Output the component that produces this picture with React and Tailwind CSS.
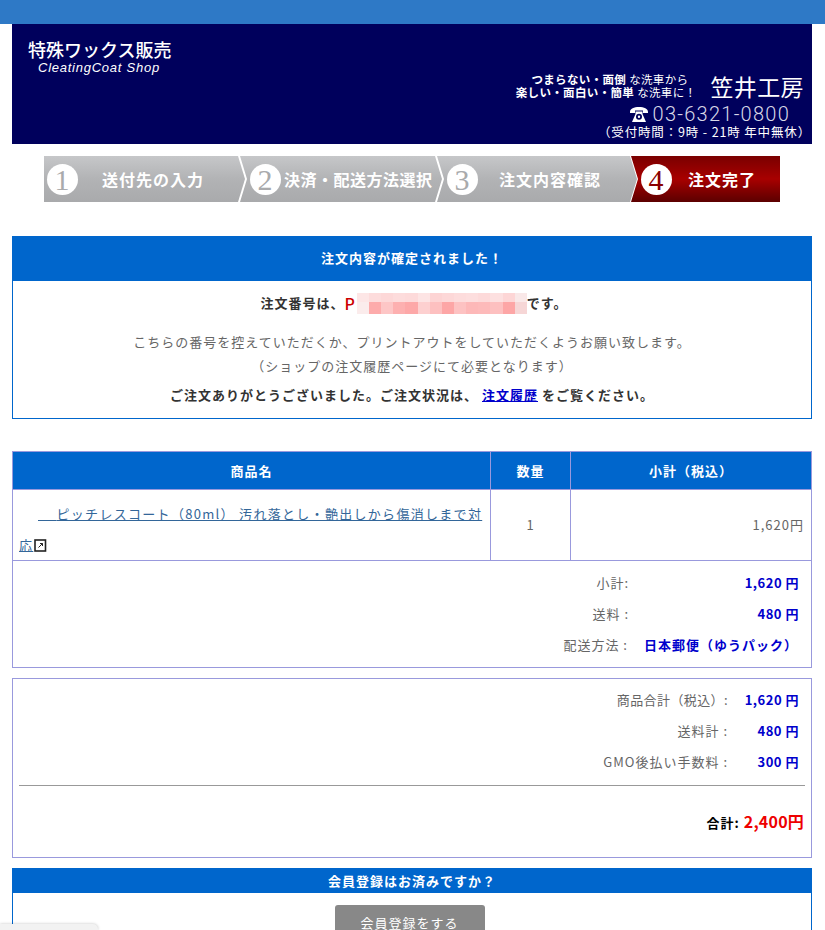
const mosaicTop = ['bg-[#fde6e6]','bg-[#fddcdc]','bg-[#fdd8d8]','bg-[#fddcdc]','bg-[#fddada]','bg-[#fde4e4]','bg-[#fdd4d4]','bg-[#fdd8d8]','bg-[#fddcdc]','bg-[#fddede]','bg-[#fddada]','bg-[#fde0e0]','bg-[#fdd6d6]','bg-[#f9e8e8]'];
const mosaicBottom = ['bg-[#fbecec]','bg-[#fdabab]','bg-[#fdc6c6]','bg-[#fdb0b0]','bg-[#fda8a8]','bg-[#fdd0d0]','bg-[#fdc0c0]','bg-[#fda6a6]','bg-[#fdc2c2]','bg-[#fdb8b8]','bg-[#fdbaba]','bg-[#fdc0c0]','bg-[#fda6a6]','bg-[#f6d6d6]'];

const steps = [
  { no: '1', label: '送付先の入力', box: 'w-[201px] pl-[3px] [clip-path:polygon(0_0,194px_0,201px_50%,194px_100%,0_100%)]', text: 'pl-[24px] tracking-[1px]' },
  { no: '2', label: '決済・配送方法選択', box: '-ml-[5px] w-[202px] pl-[10px] [clip-path:polygon(0_0,195px_0,202px_50%,195px_100%,0_100%,7px_50%)]', text: 'pl-[3px] tracking-[0.5px]' },
  { no: '3', label: '注文内容確認', box: '-ml-[5px] w-[200px] pl-[10px] [clip-path:polygon(0_0,193px_0,200px_50%,193px_100%,0_100%,7px_50%)]', text: 'pl-[21px] tracking-[1px]' },
];

function StepNo({ no, color }) {
  return (
    <span className={`flex h-[31px] w-[31px] shrink-0 items-center justify-center rounded-full bg-white font-['Liberation_Serif',serif] text-[30px] font-normal ${color}`}>
      {no}
    </span>
  );
}

function Row({ label, value, labelW = 'pr-0', valueW = 'w-[83px]', valueClass = 'pr-[12px] tracking-[0.5px]' }) {
  return (
    <div className="flex h-[31px] items-center justify-end">
      <span className={`text-right text-[#666] ${labelW}`}>{label}</span>
      <span className={`text-right font-bold text-[#0000cc] ${valueW} ${valueClass}`}>{value}</span>
    </div>
  );
}

export default function App() {
  return (
    <div className="relative h-[930px] overflow-hidden bg-white font-['Noto_Sans_CJK_JP',sans-serif] text-[13px] tracking-[1px] text-[#333]">
      <div className="h-6 bg-[#2e79c6]" />

      <div className="ml-3 flex h-[120px] w-[800px] justify-between bg-[#00005c] text-white">
        <div className="pl-4 pt-[13px]">
          <div className="text-[18px] leading-[24px] font-medium tracking-normal">特殊ワックス販売</div>
          <div className="pl-[10px] font-['Liberation_Sans',sans-serif] text-[13px] leading-[14px] italic tracking-[0.75px]">CleatingCoat Shop</div>
        </div>
        <div className="flex flex-col items-end pr-[1px] pt-[47px]">
          <div className="flex items-center pr-[7px]">
            <div className="pr-[14px] text-right text-[11.5px] leading-[13px] tracking-[0.35px]">
              <div className="pr-[8px]"><b>つまらない・面倒</b> な洗車から</div>
              <div><b>楽しい・面白い・簡単</b> な洗車に！</div>
            </div>
            <div className="text-[23px] leading-[30px] tracking-[0.4px]">笠井工房</div>
          </div>
          <div className="mt-[2px] flex items-center pr-[21px] font-['Roboto',sans-serif] text-[20px] leading-[22px] font-light tracking-[1.25px] text-[#d8d8e8]">
            <svg className="mr-[5px]" width="18" height="15" viewBox="0 0 18 15" fill="#fff">
              <path d="M0 5C0 1.5 4 0 9 0s9 1.5 9 5v1h-5V3.6H5V6H0z" />
              <path fillRule="evenodd" d="M5.500 4.500h7V7L16 15H2L5.500 7zM9 6.800a3 3 0 1 0 0 6 3 3 0 0 0 0-6zM9 8.600a1.200 1.200 0 1 1 0 2.400 1.200 1.200 0 0 1 0-2.400z" />
            </svg>
            03-6321-0800
          </div>
          <div className="-mt-[1px] text-[12.5px] leading-[15px] tracking-[0.85px]">（受付時間：9時 - 21時 年中無休）</div>
        </div>
      </div>

      <div className="ml-11 mt-3 flex h-[46px] w-[736px] text-[16px] font-bold text-white">
        {steps.map(s => (
          <div key={s.no} className={`flex shrink-0 items-center bg-gradient-to-b from-[#c6c7c9] via-[#b2b3b5] to-[#a9aaac] ${s.box}`}>
            <StepNo no={s.no} color="text-[#a9aaac]" />
            <span className={`whitespace-nowrap ${s.text}`}>{s.label}</span>
          </div>
        ))}
        <div className="-ml-[6px] flex w-[149px] shrink-0 items-center bg-gradient-to-b from-[#7a0000] via-[#a80000] to-[#5c0000] pl-[10px] [clip-path:polygon(0_0,100%_0,100%_100%,0_100%,7px_50%)]">
          <StepNo no="4" color="text-[#8a0000]" />
          <span className="whitespace-nowrap pl-[16px] tracking-[1px]">注文完了</span>
        </div>
      </div>

      <div className="ml-3 mt-[34px] w-[800px] border border-[#0066cc] text-center">
        <div className="flex h-11 items-center justify-center bg-[#0066cc] pb-[3px] font-bold text-white">注文内容が確定されました！</div>
        <div className="h-[137px]">
          <div className="flex h-[44px] items-center justify-center pl-[4px] font-bold">
            注文番号は、<span className="text-[16px] font-medium text-[#cc0000]">P</span>
            <span className="ml-[1px] flex h-[21px] w-[170px] flex-col">
              <span className="flex h-[9px]">{mosaicTop.map((c, i) => <i key={i} className={`flex-1 ${c}`} />)}</span>
              <span className="flex h-[12px]">{mosaicBottom.map((c, i) => <i key={i} className={`flex-1 ${c}`} />)}</span>
            </span>
            です。
          </div>
          <div className="mt-[5px] leading-[24px] text-[#666]">
            <div>こちらの番号を控えていただくか、プリントアウトをしていただくようお願い致します。</div>
            <div>（ショップの注文履歴ページにて必要となります）</div>
          </div>
          <div className="mt-[5px] font-bold leading-[24px]">
            ご注文ありがとうございました。ご注文状況は、 <a href="#" className="text-[#0000cc] underline">注文履歴</a> をご覧ください。
          </div>
        </div>
      </div>

      <table className="ml-3 mt-8 w-[800px] table-fixed border-collapse">
        <thead>
          <tr className="h-[38px] bg-[#0066cc] font-bold text-white">
            <th className="w-[478px] border border-[#9999dd]">商品名</th>
            <th className="w-[80px] border border-[#9999dd]">数量</th>
            <th className="border border-[#9999dd]">小計（税込）</th>
          </tr>
        </thead>
        <tbody>
          <tr className="h-[71px]">
            <td className="border border-[#9999dd] px-[6px] pt-[8px] align-top leading-[31px] tracking-[1.3px]">
              <span className="inline-block w-[19px]" />
              <a href="#" className="whitespace-pre text-[#336699] underline">{'　 '}ピッチレスコート（80ml） 汚れ落とし・艶出しから傷消しまで対<br />応</a>
              <svg className="ml-[1px] inline-block align-[-2px]" width="13" height="13" viewBox="0 0 13 13" fill="none" stroke="#222">
                <rect x="1" y="1" width="10.500" height="11" strokeWidth="1.6" />
                <path d="M4.500 8.500 8.500 4.500M6 4.500H8.500V7" strokeWidth="1" />
              </svg>
            </td>
            <td className="border border-[#9999dd] text-center text-[#666]">1</td>
            <td className="border border-[#9999dd] px-[7px] text-right text-[#666]">1,620円</td>
          </tr>
        </tbody>
      </table>

      <div className="ml-3 h-[107px] w-[800px] border border-t-0 border-[#9999dd] pt-[6px]">
        <Row label="小計:" value="1,620 円" labelW="pr-[4px]" valueW="w-[178px]" />
        <Row label="送料 :" value="480 円" labelW="pr-[4px]" valueW="w-[178px]" />
        <Row label="配送方法 :" value="日本郵便（ゆうパック）" labelW="pr-[4px]" valueW="w-auto" valueClass="pl-[12px] pr-[13px]" />
      </div>

      <div className="ml-3 mt-[10px] h-[180px] w-[800px] border border-[#9999dd] pt-[5px]">
        <Row label="商品合計（税込）:" value="1,620 円" labelW="tracking-[0.4px]" />
        <Row label="送料計 :" value="480 円" />
        <Row label="GMO後払い手数料 :" value="300 円" />
        <div className="mx-[6px] mt-[8px] h-px bg-[#999]" />
        <div className="mt-[23px] flex items-baseline justify-end pr-[7px] font-bold text-black">
          合計:<span className="ml-[4px] text-[16px] tracking-[0.2px] text-[#ee0000]">2,400円</span>
        </div>
      </div>

      <div className="ml-3 mt-[10px] w-[800px] border-x border-[#0066cc] text-center">
        <div className="flex h-[25px] items-center justify-center bg-[#0066cc] font-bold text-white">会員登録はお済みですか？</div>
        <div className="pr-[5px] pt-3">
          <a href="#" className="inline-flex h-9 w-[150px] items-center justify-center rounded-[3px] bg-[#888] text-white">会員登録をする</a>
        </div>
      </div>

      <div className="absolute bottom-0 left-0 h-[6px] w-[98px] rounded-tr-[5px] bg-[#f2f2f2] shadow-[0_0_3px_rgba(0,0,0,0.25)]" />
    </div>
  );
}
